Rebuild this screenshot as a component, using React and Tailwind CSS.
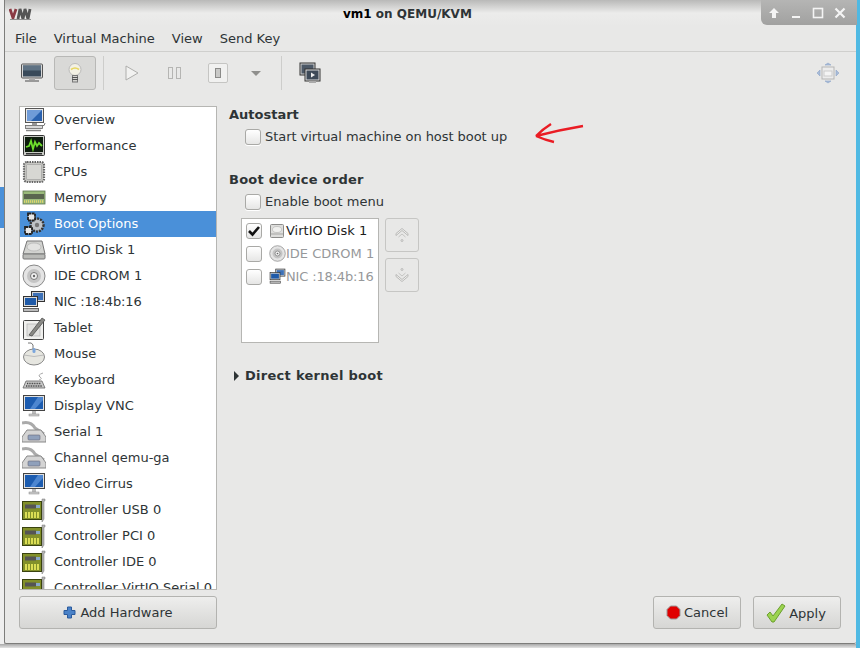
const Ic = ({ children, w = 24, h = 24, cls = "" }) => (
  <svg width={w} height={h} viewBox="0 0 24 24" className={"shrink-0 " + cls}>{children}</svg>
);

const Overview = () => (
  <Ic>
    <rect x="3.500" y="0.500" width="18" height="14" fill="#e8e8e8" stroke="#555" />
    <rect x="5" y="2" width="15" height="11" fill="#2a62b0" />
    <path d="M5 2h15L9 13H5z" fill="#6f9bd8" />
    <rect x="10" y="15" width="5" height="2" fill="#999" />
    <rect x="3.500" y="17.500" width="17" height="3" fill="#d8d8d8" stroke="#666" strokeWidth=".8" />
    <path d="M4 22.500h15" stroke="#888" strokeWidth="1.500" />
    <path d="M20 18q3 0 3-3" fill="none" stroke="#777" />
  </Ic>
);
const Perf = () => (
  <Ic>
    <rect x="1.500" y="1.500" width="21" height="20" rx="1" fill="#c9cbc6" stroke="#333" />
    <rect x="3" y="3" width="18" height="15" fill="#0d1c0d" />
    <path d="M4 13l3-1 2-5 2 8 2-7 2 4 2-3 3 3" fill="none" stroke="#6dde2c" strokeWidth="1.800" />
    <rect x="4" y="19" width="16" height="1.500" fill="#333" />
  </Ic>
);
const Cpu = () => (
  <Ic>
    <rect x="2" y="2" width="20" height="20" rx="3" fill="#c7c7c3" stroke="#666" strokeWidth="2.200" strokeDasharray="1.500 1" />
    <rect x="4.500" y="4.500" width="15" height="15" rx="1" fill="#d7d7d3" stroke="#999" strokeWidth=".6" />
  </Ic>
);
const Mem = () => (
  <Ic>
    <rect x="1" y="5" width="22" height="13" fill="#9aba7b" stroke="#5e7550" strokeWidth=".8" />
    <rect x="2" y="8" width="20" height="5" fill="#59654f" />
    <path d="M2 15.500h20" stroke="#e0d66c" strokeWidth="2.500" strokeDasharray="1 1" />
  </Ic>
);
const Gears = () => (
  <Ic>
    <circle cx="15" cy="13" r="6.500" fill="#bfc3c6" stroke="#333" strokeWidth="2.400" strokeDasharray="2 1" />
    <circle cx="15" cy="13" r="2.200" fill="#777" />
    <rect x="6" y="1.500" width="7" height="7" fill="#e8e8e8" stroke="#222" strokeWidth="1.800" strokeDasharray="3 .6" />
    <rect x="3" y="15" width="7" height="7" fill="#e8e8e8" stroke="#222" strokeWidth="1.800" strokeDasharray="3 .6" />
  </Ic>
);
const Disk = () => (
  <Ic>
    <path d="M5 3h15l3 13H1z" fill="#d2d3d0" stroke="#777" />
    <rect x="1" y="16" width="22" height="5" rx="1" fill="#b9bab7" stroke="#777" />
    <ellipse cx="12" cy="9" rx="7" ry="4" fill="#e3e3e1" stroke="#aaa" strokeWidth=".6" />
  </Ic>
);
const DiskSmall = () => (
  <svg width="14" height="14" viewBox="0 0 14 14" className="shrink-0">
    <rect x="0.500" y="0.500" width="13" height="13" rx="1" fill="#dededc" stroke="#8c8c8a" />
    <ellipse cx="7" cy="5.500" rx="4.500" ry="3" fill="#f0f0ee" stroke="#b0b0ae" strokeWidth=".6" />
    <path d="M1 10h12" stroke="#a5a5a3" />
  </svg>
);
const Cd = ({ size = 24 }) => (
  <Ic w={size} h={size}>
    <circle cx="12" cy="12" r="11" fill="#e4e4e4" stroke="#888" />
    <circle cx="12" cy="12" r="7" fill="#c4c4c4" />
    <circle cx="12" cy="12" r="3.500" fill="#f2f2f2" stroke="#777" />
    <circle cx="12" cy="12" r="1.200" fill="#666" />
  </Ic>
);
const Nic = ({ size = 24 }) => (
  <Ic w={size} h={size}>
    <rect x="9.500" y="1.500" width="13" height="10" fill="#cfd3d8" stroke="#333" />
    <rect x="11" y="3" width="10" height="7" fill="#3d71b8" />
    <rect x="1.500" y="6.500" width="14" height="10" fill="#d8d8d8" stroke="#333" />
    <rect x="3" y="8" width="11" height="7" fill="#1f5aa8" />
    <rect x="1.500" y="18.500" width="15" height="3" fill="#bbb" stroke="#444" strokeWidth=".8" />
  </Ic>
);
const Tablet = () => (
  <Ic>
    <rect x="1.500" y="4.500" width="20" height="19" rx="1" fill="#f0f0ee" stroke="#444" />
    <rect x="5" y="8" width="13" height="12" fill="#e2e2e0" stroke="#aaa" strokeWidth=".6" />
    <path d="M7 19L20 2l3 2L10 20z" fill="#8a8a86" stroke="#444" strokeWidth=".7" />
  </Ic>
);
const Mouse = () => (
  <Ic>
    <ellipse cx="12" cy="15" rx="10.500" ry="8" fill="#e6e6e0" stroke="#888" />
    <path d="M2 13q10 3 20 0" fill="none" stroke="#bbb" />
    <path d="M11 7V3Q10 0 6 1" fill="none" stroke="#777" />
    <rect x="10.500" y="6" width="3" height="5" rx="1.500" fill="#7aa5dc" />
  </Ic>
);
const Keyboard = () => (
  <Ic>
    <path d="M4 13h16l3 7H1z" fill="#c8c8c8" stroke="#666" strokeWidth=".8" />
    <path d="M5 15.500h14M4 18h16" stroke="#444" strokeWidth="1.600" strokeDasharray="1 .7" />
    <path d="M17 12q4-1 1-3t3-4" fill="none" stroke="#aaa" />
  </Ic>
);
const Display = () => (
  <Ic>
    <rect x="1.500" y="1.500" width="21" height="15" fill="#e0e0e0" stroke="#444" />
    <rect x="3" y="3" width="18" height="12" fill="#1c5cb0" />
    <path d="M8 15L16 3h5v3L13 15z" fill="#4d86d0" />
    <rect x="10" y="17" width="4" height="3" fill="#bbb" />
    <rect x="7" y="20" width="10" height="2" fill="#ccc" stroke="#888" strokeWidth=".5" />
  </Ic>
);
const Serial = () => (
  <Ic>
    <path d="M0 3q9-2 13 5l9 6" fill="none" stroke="#aaa" strokeWidth="3" />
    <path d="M5 10h14l5 7v5H0v-5z" fill="#d4d4d4" stroke="#888" />
    <rect x="6" y="15" width="12" height="5" rx="1" fill="#8fa0bb" stroke="#667" strokeWidth=".6" />
  </Ic>
);
const Card = () => (
  <Ic>
    <path d="M20 1h3v2h-1v18l-2 3z" fill="#b5b5b5" stroke="#777" strokeWidth=".5" />
    <rect x="0.500" y="3.500" width="19" height="18" fill="#82902a" stroke="#3a4310" />
    <rect x="3" y="6.500" width="11" height="4" fill="#555" />
    <rect x="14" y="7" width="4" height="3" fill="#88a8c8" />
    <path d="M4 20v-6M7 20v-6M10 20v-6M13 20v-6M16 20v-6" stroke="#ecec5c" strokeWidth="1.700" />
  </Ic>
);

const items = [
  ["Overview", Overview], ["Performance", Perf], ["CPUs", Cpu], ["Memory", Mem],
  ["Boot Options", Gears], ["VirtIO Disk 1", Disk], ["IDE CDROM 1", Cd], ["NIC :18:4b:16", Nic],
  ["Tablet", Tablet], ["Mouse", Mouse], ["Keyboard", Keyboard], ["Display VNC", Display],
  ["Serial 1", Serial], ["Channel qemu-ga", Serial], ["Video Cirrus", Display],
  ["Controller USB 0", Card], ["Controller PCI 0", Card], ["Controller IDE 0", Card], ["Controller VirtIO Serial 0", Card],
];

const Check = ({ on = false }) => (
  <span className="w-[16px] h-[16px] rounded-[3px] border border-[#a9a9a6] bg-gradient-to-b from-white to-[#e6e6e5] flex items-center justify-center shrink-0 shadow-[0_1px_0_#fff]">
    {on && (
      <svg width="14" height="14" viewBox="0 0 14 14">
        <path d="M2 7l3.500 3.500L12 3" fill="none" stroke="#111" strokeWidth="2.600" />
      </svg>
    )}
  </span>
);

const Menu = () => (
  <div className="h-[25px] shrink-0 flex items-center text-[13px] text-[#2e3436] pl-[5px]">
    <span className="px-[5px] mr-[7px]">File</span>
    <span className="px-[5px] mr-[7px]">Virtual Machine</span>
    <span className="px-[5px] mr-[7px]">View</span>
    <span className="px-[5px]">Send Key</span>
  </div>
);

const Toolbar = () => (
  <div className="h-[45px] shrink-0 border-t border-[#cfcfcd] flex items-center pl-[10px] pb-[2px] relative">
    <span className="w-[34px] h-[34px] flex items-center justify-center">
      <svg width="22" height="20" viewBox="0 0 22 20">
        <rect x="0.500" y="1" width="21" height="14" rx="1" fill="#d8d8d8" stroke="#555" />
        <rect x="2" y="2.500" width="18" height="11" fill="#394a5a" />
        <path d="M2 2.500h18v5H2z" fill="#5f7283" />
        <rect x="8" y="15" width="6" height="2" fill="#aaa" />
        <rect x="4" y="17" width="14" height="2" fill="#999" />
      </svg>
    </span>
    <span className="ml-[5px] w-[42px] h-[34px] rounded-[3px] border border-[#b8b8b6] bg-[#d9d9d7] flex items-center justify-center">
      <svg width="14" height="20" viewBox="0 0 14 20">
        <circle cx="7" cy="6.500" r="6" fill="#f3f1e4" stroke="#bbb" />
        <path d="M3 6.500q4-3 8 0" fill="none" stroke="#e7d660" strokeWidth="1.600" />
        <rect x="4.500" y="12.500" width="5" height="6.500" fill="#d4d4d0" stroke="#777" />
        <path d="M4 14.500h6M4 16.500h6" stroke="#555" />
      </svg>
    </span>
    <span className="ml-[7px] w-px h-[34px] bg-[#cdcdcb]" />
    <span className="ml-[21px]">
      <svg width="14" height="16" viewBox="0 0 14 16" className="block">
        <path d="M1 1l12 7-12 7z" fill="#f2f2f1" stroke="#aeaeac" />
      </svg>
    </span>
    <span className="ml-[29px] flex gap-[3px]">
      <span className="w-[5px] h-[12px] border border-[#b5b5b3] bg-[#e9e9e8]" />
      <span className="w-[5px] h-[12px] border border-[#b5b5b3] bg-[#e9e9e8]" />
    </span>
    <span className="ml-[27px] w-[20px] h-[20px] rounded-[2px] border border-[#c5c5c3] bg-[#f1f1f0] flex items-center justify-center">
      <span className="w-[6px] h-[10px] bg-[#c9c9c7] border border-[#8b8b89]" />
    </span>
    <span className="ml-[23px] w-0 h-0 border-x-[5px] border-x-transparent border-t-[5px] border-t-[#8f8f8d]" />
    <span className="ml-[20px] w-px h-[34px] bg-[#cdcdcb]" />
    <span className="ml-[17px]">
      <svg width="22" height="22" viewBox="0 0 22 22" className="block">
        <rect x="1" y="1" width="15" height="12" fill="#cfcfcf" stroke="#333" />
        <rect x="2.500" y="2.500" width="12" height="9" fill="#4c5866" />
        <rect x="6" y="7" width="15" height="12" fill="#dcdcdc" stroke="#333" />
        <rect x="7.500" y="8.500" width="12" height="9" fill="#3e4a58" />
        <path d="M12 10.500l4 2.500-4 2.500z" fill="#eee" />
        <rect x="10" y="19" width="7" height="2" fill="#aaa" />
      </svg>
    </span>
    <span className="absolute right-[16px] top-[10px]">
      <svg width="24" height="22" viewBox="0 0 24 22" className="block">
        <rect x="6" y="5" width="12" height="12" fill="#ececec" stroke="#b5b5b5" />
        <rect x="8" y="9" width="8" height="5" fill="#f4f4f4" stroke="#ccc" />
        <path d="M9 3l3-2 3 2zM9 19l3 2 3-2zM4 8l-3 3 3 3zM20 8l3 3-3 3z" fill="#a9bcd8" stroke="#8da5c9" strokeWidth=".6" />
      </svg>
    </span>
  </div>
);

const Sidebar = () => (
  <div className="w-[198px] flex flex-col shrink-0">
    <div className="h-[484px] border border-[#b6b6b3] bg-white overflow-hidden text-[13px] text-[#2e3436]">
      {items.map(([label, Icon]) => {
        const sel = label === "Boot Options";
        return (
          <div key={label} className={"h-[26px] flex items-center pl-[2px] gap-[8px] whitespace-nowrap " + (sel ? "bg-[#4a90d9] text-white" : "")}>
            <Icon />
            <span className={label.startsWith("NIC") ? "tracking-[-0.15px]" : ""}>{label}</span>
          </div>
        );
      })}
    </div>
    <button className="mt-[6px] h-[33px] rounded-[3px] border border-[#b3b3b0] bg-gradient-to-b from-[#eeeeed] to-[#d6d6d4] flex items-center justify-center gap-[4px] text-[13px] text-[#2e3436]">
      <svg width="13" height="13" viewBox="0 0 13 13">
        <path d="M4.500 1h4v3.500H12v4H8.500V12h-4V8.500H1v-4h3.500z" fill="#4a82c8" stroke="#2a5a9c" />
      </svg>
      Add Hardware
    </button>
  </div>
);

const Arrow = ({ down = false }) => (
  <span className="w-[34px] h-[34px] rounded-[3px] border border-[#c6c6c4] bg-[#e8e8e7] flex items-center justify-center">
    <svg width="18" height="18" viewBox="0 0 18 18" className={down ? "rotate-180" : ""}>
      <path d="M3 7.500l6-5 6 5v2l-6-5-6 5z" fill="#f0f0ef" stroke="#b9b9b7" />
      <path d="M5.500 11l3.500-3 3.500 3" fill="none" stroke="#c5c5c3" />
      <circle cx="9" cy="14.500" r="1" fill="none" stroke="#b9b9b7" />
    </svg>
  </span>
);

const Row = ({ on, icon, label, dim }) => (
  <div className={"h-[23px] flex items-center pl-[4px] whitespace-nowrap " + (dim ? "text-[#96989a]" : "text-[#1c1c1c]")}>
    <Check on={on} />
    <span className="ml-[6px] w-[18px] flex justify-center">{icon}</span>
    <span className={label.startsWith("NIC") ? "tracking-[-0.15px]" : ""}>{label}</span>
  </div>
);

const Main = () => (
  <div className="ml-[12px] flex-1 text-[13px] text-[#2e3436] relative">
    <div className="font-bold leading-[16px] mt-[1px]">Autostart</div>
    <div className="mt-[5px] ml-[16px] flex items-center gap-[4px] h-[18px]">
      <Check />
      <span className="tracking-[-0.05px]">Start virtual machine on host boot up</span>
    </div>
    <svg width="60" height="40" viewBox="0 0 60 40" className="absolute left-[300px] top-[10px]">
      <path d="M7 20Q30 14 54 10M7 20Q14 13 22 8M7 20Q16 24 25 26" fill="none" stroke="#ea1c24" strokeWidth="2.400" />
    </svg>
    <div className="mt-[26px] font-bold leading-[16px] tracking-[0.25px]">Boot device order</div>
    <div className="mt-[5px] ml-[16px] flex items-center gap-[4px] h-[18px]">
      <Check />
      <span>Enable boot menu</span>
    </div>
    <div className="mt-[7px] ml-[12px] flex gap-[6px]">
      <div className="w-[138px] h-[125px] border border-[#b6b6b3] bg-white">
        <Row on icon={<DiskSmall />} label="VirtIO Disk 1" />
        <Row dim icon={<Cd size={17} />} label="IDE CDROM 1" />
        <Row dim icon={<Nic size={17} />} label="NIC :18:4b:16" />
      </div>
      <div className="flex flex-col gap-[6px]">
        <Arrow />
        <Arrow down />
      </div>
    </div>
    <div className="mt-[25px] ml-[5px] flex items-center gap-[6px] font-bold leading-[16px] tracking-[0.28px]">
      <span className="w-0 h-0 border-y-[5px] border-y-transparent border-l-[5px] border-l-[#2e3436]" />
      Direct kernel boot
    </div>
  </div>
);

export default function App() {
  return (
    <div className="w-[860px] h-[648px] overflow-hidden bg-[#efefef] relative font-['DejaVu_Sans',sans-serif]">
      <div className="absolute left-0 top-[187px] w-[4px] h-[41px] bg-[#4a90d9]" />
      <div className="absolute left-0 bottom-0 w-full h-[4px] bg-gradient-to-b from-[#a8a8a8] to-[#e4e4e4]" />
      <div className="absolute right-0 top-0 w-[4px] h-full bg-[#4fb9e3]" />
      <div className="absolute left-[4px] top-0 w-[852px] h-[644px] bg-[#e8e8e7] border-l border-b border-[#7d7d7b] rounded-b-[2px] flex flex-col">
        <div className="h-[26px] shrink-0 bg-gradient-to-b from-[#b9b9b8] via-[#ececeb] to-[#e8e8e7] flex items-center pl-[338px] relative">
          <svg width="23" height="12" viewBox="0 0 23 12" className="absolute left-[4px] top-[8px]">
            <path d="M9 11l2-10 3 10 2-10 3 10 2-10" fill="none" stroke="#555" strokeWidth="2.800" />
            <path d="M1 1l3 9 3-9" fill="none" stroke="#8a3a44" strokeWidth="2.800" />
            <path d="M1 11.500h21" stroke="#8f8f8f" strokeWidth="1" />
          </svg>
          <span className="text-[12px] font-bold text-[#2e3436] mt-[1px]"><span className="text-black">vm1</span> on QEMU/KVM</span>
          <div className="absolute right-[-1px] top-0 w-[96px] h-[25px] rounded-bl-[6px] bg-gradient-to-b from-[#b5b5b4] to-[#a1a1a0] flex items-center gap-[10px] pl-[7px]">
            <svg width="12" height="12" viewBox="0 0 12 12"><path d="M6 1L1 6h3v5h4V6h3z" fill="#f4f4f4" /></svg>
            <svg width="12" height="12" viewBox="0 0 12 12"><rect x="2" y="9" width="8" height="2" fill="#f4f4f4" /></svg>
            <svg width="12" height="12" viewBox="0 0 12 12"><rect x="1.500" y="1.500" width="9" height="9" fill="none" stroke="#f4f4f4" strokeWidth="1.600" /></svg>
            <svg width="12" height="12" viewBox="0 0 12 12"><path d="M1.500 1.500l9 9M10.500 1.500l-9 9" stroke="#f4f4f4" strokeWidth="2.200" /></svg>
          </div>
        </div>
        <Menu />
        <Toolbar />
        <div className="flex-1 flex pt-[10px] pl-[14px] pr-[14px] pb-[14px] relative">
          <Sidebar />
          <Main />
          <div className="absolute right-[15px] bottom-[14px] flex gap-[12px]">
            <button className="w-[88px] h-[33px] rounded-[3px] border border-[#b3b3b0] bg-gradient-to-b from-[#eeeeed] to-[#d6d6d4] flex items-center justify-center gap-[3px] text-[13px] text-[#2e3436]">
              <svg width="15" height="15" viewBox="0 0 15 15">
                <path d="M4.500 1h6l3.500 3.500v6L10.500 14h-6L1 10.500v-6z" fill="#e00000" stroke="#999" />
              </svg>
              Cancel
            </button>
            <button className="w-[88px] h-[33px] rounded-[3px] border border-[#b3b3b0] bg-gradient-to-b from-[#eeeeed] to-[#d6d6d4] flex items-center justify-center gap-[3px] text-[13px] text-[#2e3436]">
              <svg width="20" height="20" viewBox="0 0 20 20" className="-ml-[2px]">
                <path d="M1 12l3-3 3 4L16 1l3 2L8 19H6z" fill="#9bd34f" stroke="#6b9f2e" />
              </svg>
              <span className="mt-[2px]">Apply</span>
            </button>
          </div>
        </div>
      </div>
    </div>
  );
}
